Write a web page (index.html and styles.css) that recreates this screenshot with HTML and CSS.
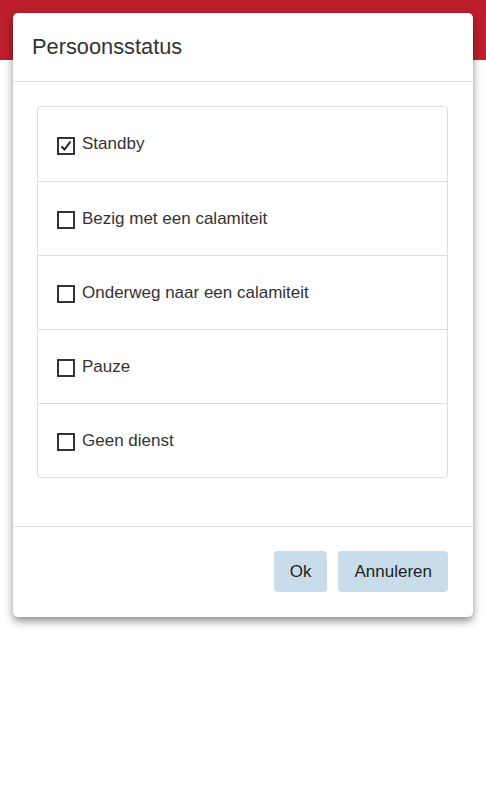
FILE: index.html
```html
<!DOCTYPE html>
<html>
<head>
<meta charset="utf-8">
<link rel="stylesheet" href="styles.css">
</head>
<body>
<div class="topbar"></div>
<div class="modal">
  <div class="modal-header">Persoonsstatus</div>
  <div class="modal-body">
    <ul class="list">
      <li class="item"><span class="box checked"><svg viewBox="0 0 14 14" width="14" height="14"><path d="M2.5 7.5 L5.5 10.5 L11.5 2.5" fill="none" stroke="#222" stroke-width="2"/></svg></span>Standby</li>
      <li class="item"><span class="box"></span>Bezig met een calamiteit</li>
      <li class="item"><span class="box"></span>Onderweg naar een calamiteit</li>
      <li class="item"><span class="box"></span>Pauze</li>
      <li class="item"><span class="box"></span>Geen dienst</li>
    </ul>
  </div>
  <div class="modal-footer">
    <button class="btn">Ok</button>
    <button class="btn">Annuleren</button>
  </div>
</div>
</body>
</html>
```
FILE: styles.css
```css
html, body {
  margin: 0;
  padding: 0;
  background: #fff;
  font-family: "Liberation Sans", Arial, sans-serif;
  color: #333;
}
.topbar {
  height: 60px;
  background: #bd1f2c;
}
.modal {
  position: absolute;
  top: 13px;
  left: 13px;
  width: 460px;
  background: #fff;
  border-radius: 5px;
  box-shadow: 0 4px 8px rgba(0,0,0,0.45);
}
.modal-header {
  padding: 20px 19px 20px;
  font-size: 21.8px;
  line-height: 28px;
  border-bottom: 1px solid #e5e5e5;
}
.modal-body {
  padding: 24px 25px 48px 24px;
  border-bottom: 1px solid #e5e5e5;
}
.list {
  list-style: none;
  margin: 0;
  padding: 0;
  border: 1px solid #dddddd;
  border-radius: 4px;
}
.item {
  height: 73px;
  display: flex;
  align-items: center;
  padding-left: 19px;
  font-size: 17px;
  border-top: 1px solid #dddddd;
}
.item:first-child {
  border-top: none;
  height: 74px;
}
.box {
  width: 18px;
  height: 18px;
  box-sizing: border-box;
  border: 2px solid #333;
  margin-right: 7px;
  display: flex;
  align-items: center;
  justify-content: center;
  margin-top: 3px;
}
.box svg {
  display: block;
}
.modal-footer {
  display: flex;
  justify-content: flex-end;
  gap: 11px;
  padding: 24px 25px 25px;
}
.btn {
  height: 41px;
  padding: 0 16px;
  border: none;
  border-radius: 4px;
  background: #c9dce9;
  font-family: "Liberation Sans", Arial, sans-serif;
  font-size: 17px;
  color: #222;
}
```
